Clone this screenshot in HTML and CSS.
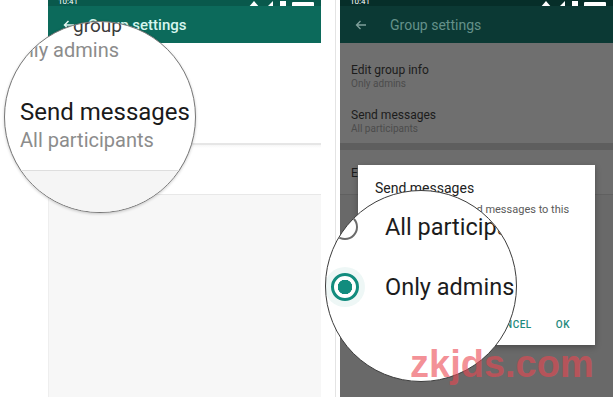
FILE: index.html
```
<!DOCTYPE html>
<html lang="en">
<head>
<meta charset="utf-8">
<title>Group settings</title>
<link rel="stylesheet" href="styles.css">
</head>
<body>
<div class="stage">
  <div class="phone phone-light">
    <div class="statusbar">
      <span class="time">10:41</span>
      <svg class="sicons" width="70" height="8" viewBox="0 0 70 8"><path d="M2 8 L8 1 L14 8Z" fill="currentColor"/><path d="M20 8 L27 1 L27 8Z" fill="currentColor"/><rect x="34" y="1" width="6" height="7" fill="currentColor"/><rect x="46" y="2" width="22" height="6" rx="1" fill="currentColor"/></svg>
    </div>
    <div class="appbar">
      <svg class="back" width="12" height="10" viewBox="0 0 12 10"><path d="M11 5H1.5M5.5 1L1.5 5l4 4" fill="none" stroke="currentColor" stroke-width="1.5"/></svg>
      <span class="title title-left">Group settings</span>
    </div>
    <div class="section s1">
      <div class="item"><div class="t">Edit group info</div><div class="s">Only admins</div></div>
      <div class="item"><div class="t">Send messages</div><div class="s">All participants</div></div>
    </div>
    <div class="divider"></div>
    <div class="section s2">
      <div class="item"><div class="t">Edit group admins</div></div>
    </div>
    <div class="rest"></div>
  </div>

  <div class="gutter"></div>

  <div class="phone phone-dim">
    <div class="statusbar">
      <span class="time">10:41</span>
      <svg class="sicons" width="70" height="8" viewBox="0 0 70 8"><path d="M2 8 L8 1 L14 8Z" fill="currentColor"/><path d="M20 8 L27 1 L27 8Z" fill="currentColor"/><rect x="34" y="1" width="6" height="7" fill="currentColor"/><rect x="46" y="2" width="22" height="6" rx="1" fill="currentColor"/></svg>
    </div>
    <div class="appbar">
      <svg class="back" width="12" height="10" viewBox="0 0 12 10"><path d="M11 5H1.5M5.5 1L1.5 5l4 4" fill="none" stroke="currentColor" stroke-width="1.3"/></svg>
      <span class="title">Group settings</span>
    </div>
    <div class="section s1">
      <div class="item"><div class="t">Edit group info</div><div class="s">Only admins</div></div>
      <div class="item"><div class="t">Send messages</div><div class="s">All participants</div></div>
    </div>
    <div class="divider"></div>
    <div class="section s2">
      <div class="item"><div class="t">Edit group admins</div></div>
    </div>
    <div class="rest"></div>

    <div class="dialog">
      <div class="d-title">Send messages</div>
      <div class="d-body">Choose who can send messages to this group.</div>
      <div class="d-options">
        <div class="d-opt"><span class="d-radio"></span>All participants</div>
        <div class="d-opt"><span class="d-radio on"></span>Only admins</div>
      </div>
      <div class="d-actions"><span class="btn">CANCEL</span><span class="btn">OK</span></div>
    </div>
  </div>

  <div class="lens lens-left">
    <div class="m-head">group</div>
    <div class="m-sub m-first">Only admins</div>
    <div class="m-title">Send messages</div>
    <div class="m-sub m-second">All participants</div>
    <div class="m-rest"></div>
  </div>

  <div class="lens lens-right">
    <div class="opt"><span class="radio"></span><span class="opt-label">All participants</span></div>
    <div class="opt"><span class="radio on"></span><span class="opt-label">Only admins</span></div>
  </div>

  <div class="watermark">zkjds.com</div>
</div>
</body>
</html>
```
FILE: styles.css
```
* { box-sizing: border-box; }
html, body { margin: 0; padding: 0; }
body {
  width: 613px;
  height: 397px;
  overflow: hidden;
  background: #fff;
  font-family: Roboto, "Noto Sans", sans-serif;
}
.stage {
  position: relative;
  width: 613px;
  height: 397px;
  display: flex;
  padding-left: 48px;
}
.phone {
  position: relative;
  width: 273px;
  height: 397px;
  display: flex;
  flex-direction: column;
  overflow: hidden;
}
.gutter {
  width: 19px;
  background: linear-gradient(to right, #fff 14px, #e4e4e4 14px, #e4e4e4 15px, #fff 15px);
}

/* status bar */
.statusbar {
  height: 6px;
  overflow: hidden;
  display: flex;
  justify-content: space-between;
  align-items: flex-end;
  padding: 0 5px 0 10px;
}
.time { font-size: 8px; line-height: 9px; color: #fff; }
.sicons { color: #fff; display: block; margin-bottom: -2px; }

/* app bar */
.appbar {
  height: 37px;
  display: flex;
  align-items: center;
  padding-left: 15px;
}
.back { display: block; margin-right: 23px; }
.title { font-size: 14px; }
.title-left { font-size: 15px; font-weight: 500; margin-left: -10px; }

/* list */
.section { display: flex; flex-direction: column; gap: 17px; padding-left: 11px; }
.s1 { padding-top: 20px; padding-bottom: 7px; }
.s2 { padding-top: 16px; padding-bottom: 14px; }
.item .t { font-size: 12px; line-height: 14px; }
.item .s { font-size: 10px; line-height: 14px; }
.divider { height: 7px; }
.rest { flex: 1; }

/* light phone */
.phone-light .statusbar { background: #09594c; }
.phone-light .appbar { background: #0c6a5b; color: #e3f7f2; }
.phone-light .title { color: #d6f6ef; }
.phone-light .section { background: #fff; color: #212121; }
.phone-light .item .s { color: #8a8a8a; }
.phone-light .divider { height: 5px; background: linear-gradient(#f6f6f6, #fff); border-top: 2px solid #e6e6e6; margin-bottom: 2px; }
.phone-light .rest { background: #f7f7f7; border-top: 1px solid #e8e8e8; border-left: 1px solid #eeeeee; }

/* dimmed phone */
.phone-dim .statusbar { background: #062e29; }
.phone-dim .appbar { background: #0b3934; color: #80a09b; }
.phone-dim .title { color: #64918a; }
.phone-dim .section { background: #6f6f6f; color: #1c1c1c; }
.phone-dim .item .s { color: #4c4c4c; }
.phone-dim .divider { background: #5e5e5e; }
.phone-dim .s2 { background: #6d6d6d; }
.phone-dim .rest { background: #696969; border-top: 1px solid #606060; }

/* dialog */
.dialog {
  position: absolute;
  left: 18px;
  top: 165px;
  width: 237px;
  height: 180px;
  background: #fff;
  display: flex;
  flex-direction: column;
  padding: 14px 25px 14px 17px;
  box-shadow: 0 2px 6px rgba(0,0,0,.3);
}
.d-title { font-size: 14px; line-height: 18px; color: #212121; }
.d-body { margin-top: 6px; font-size: 11px; line-height: 14px; color: #5a5a5a; }
.d-options { margin-top: 10px; display: flex; flex-direction: column; gap: 12px; }
.d-opt { display: flex; align-items: center; gap: 14px; font-size: 12px; color: #212121; }
.d-radio { width: 14px; height: 14px; border: 2px solid #777; border-radius: 50%; }
.d-radio.on { border-color: #128c7e; background: radial-gradient(circle, #128c7e 0 3px, #fff 3.5px); }
.d-actions { margin-top: auto; display: flex; justify-content: flex-end; gap: 24px; }
.btn { font-size: 10px; line-height: 12px; font-weight: 500; color: #1f8a7d; letter-spacing: .5px; }

/* magnifier lenses */
.lens {
  position: absolute;
  border-radius: 50%;
  background: #fff;
  overflow: hidden;
  display: flex;
  flex-direction: column;
}
.lens-left {
  left: 4px;
  top: 21px;
  width: 192px;
  height: 192px;
  border: 1px solid #777;
  box-shadow: 0 1px 3px rgba(0,0,0,.2);
  padding-left: 15px;
}
.m-head { font-size: 19px; line-height: 22px; color: #3a3a3a; margin-top: -7px; margin-left: 53px; }
.m-sub { font-size: 20px; line-height: 24px; color: #8c8c8c; }
.m-first { margin-top: 1px; margin-left: -11px; }
.m-title { margin-top: 36px; font-size: 24px; line-height: 28px; color: #1a1a1a; }
.m-second { margin-top: 2px; }
.m-rest { margin-top: 18px; margin-left: -15px; flex: 1; background: #f5f5f5; border-top: 1px solid #dedede; }

.lens-right {
  left: 325px;
  top: 190px;
  width: 192px;
  height: 192px;
  border: 1.5px solid #3c3c3c;
  padding-top: 6px;
  padding-left: 4px;
}
.opt { height: 60px; display: flex; align-items: center; }
.radio {
  width: 26px;
  height: 26px;
  margin-left: 2px;
  border: 2.5px solid #6b6b6b;
  border-radius: 50%;
  flex: none;
}
.radio.on {
  width: 28px;
  height: 28px;
  margin-left: 1px;
  border: 3px solid #128c7e;
  background: radial-gradient(circle, #128c7e 0 7px, #fff 7.5px);
  box-shadow: 0 0 0 6px rgba(18,140,126,.07);
}
.opt-label { margin-left: 27px; font-size: 23.5px; line-height: 28px; color: #1c1c1c; white-space: nowrap; }
.opt:last-child .opt-label { margin-left: 26px; }

.watermark {
  position: absolute;
  left: 410px;
  top: 345px;
  font-family: "Liberation Sans", Arial, sans-serif;
  font-weight: 700;
  font-size: 38px;
  line-height: 38px;
  color: rgba(235, 70, 80, .6);
}
```
